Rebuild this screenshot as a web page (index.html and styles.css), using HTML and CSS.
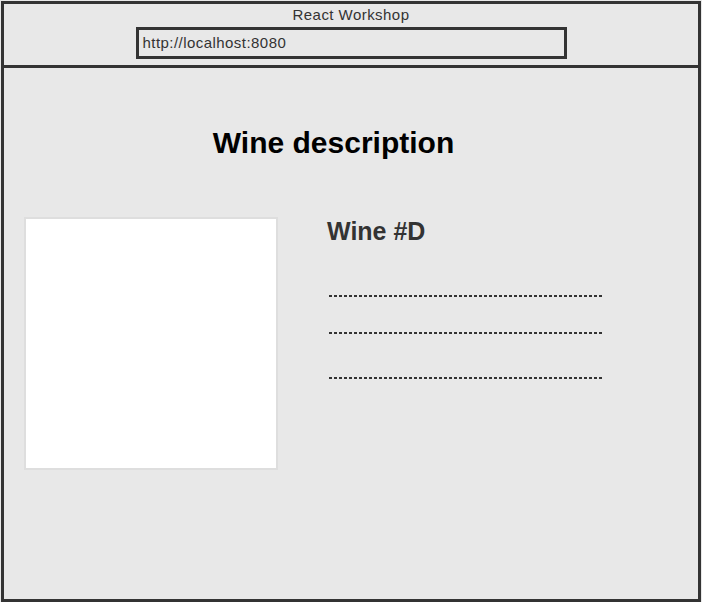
FILE: index.html
```html
<!DOCTYPE html>
<html>
<head>
<meta charset="utf-8">
<link rel="stylesheet" href="styles.css">
</head>
<body>
<div class="frame">
  <header class="browser-bar">
    <div class="window-title">React Workshop</div>
    <div class="url-box">http://localhost:8080</div>
  </header>
  <main class="page">
    <h1 class="page-title">Wine description</h1>
    <div class="wine">
      <div class="wine-picture"></div>
      <div class="wine-info">
        <h2 class="wine-name">Wine #D</h2>
        <div class="dots dots-1"></div>
        <div class="dots dots-2"></div>
        <div class="dots dots-3"></div>
      </div>
    </div>
  </main>
</div>
</body>
</html>
```

FILE: styles.css
```css
* { box-sizing: border-box; }
html, body { margin: 0; padding: 0; background: #e8e8e8; }
body { font-family: "Liberation Sans", Arial, sans-serif; color: #333; }

.frame {
  margin: 1px 0 0 1px;
  width: 700px;
  height: 601px;
  border: 3px solid #333;
  background: #e8e8e8;
  display: flex;
  flex-direction: column;
}

.browser-bar {
  height: 64px;
  border-bottom: 3px solid #333;
  display: flex;
  flex-direction: column;
  align-items: center;
  padding-top: 2px;
}

.window-title {
  font-size: 15px;
  line-height: 17px;
  letter-spacing: 0.45px;
  color: #333;
}

.url-box {
  margin-top: 4px;
  width: 431px;
  height: 32px;
  border: 3px solid #333;
  font-size: 15px;
  line-height: 26px;
  letter-spacing: 0.45px;
  padding-left: 4px;
  color: #333;
}

.page {
  flex: 1;
  padding: 57px 0 0 20px;
}

.page-title {
  margin: 0;
  font-size: 30px;
  line-height: 36px;
  font-weight: bold;
  color: #000;
  text-align: center;
  padding-right: 55px;
}

.wine {
  display: flex;
  margin-top: 56px;
}

.wine-picture {
  width: 254px;
  height: 253px;
  background: #fff;
  border: 2px solid #dedede;
}

.wine-info {
  margin-left: 49px;
  display: flex;
  flex-direction: column;
}

.wine-name {
  margin: 0;
  font-size: 25px;
  line-height: 28px;
  font-weight: bold;
  color: #333;
}

.dots {
  margin-left: 2px;
  width: 274px;
  height: 2px;
  background: repeating-linear-gradient(to right, #333 0 3px, transparent 3px 5px);
}
.dots-1 { margin-top: 50px; }
.dots-2 { margin-top: 35px; }
.dots-3 { margin-top: 43px; }
```
